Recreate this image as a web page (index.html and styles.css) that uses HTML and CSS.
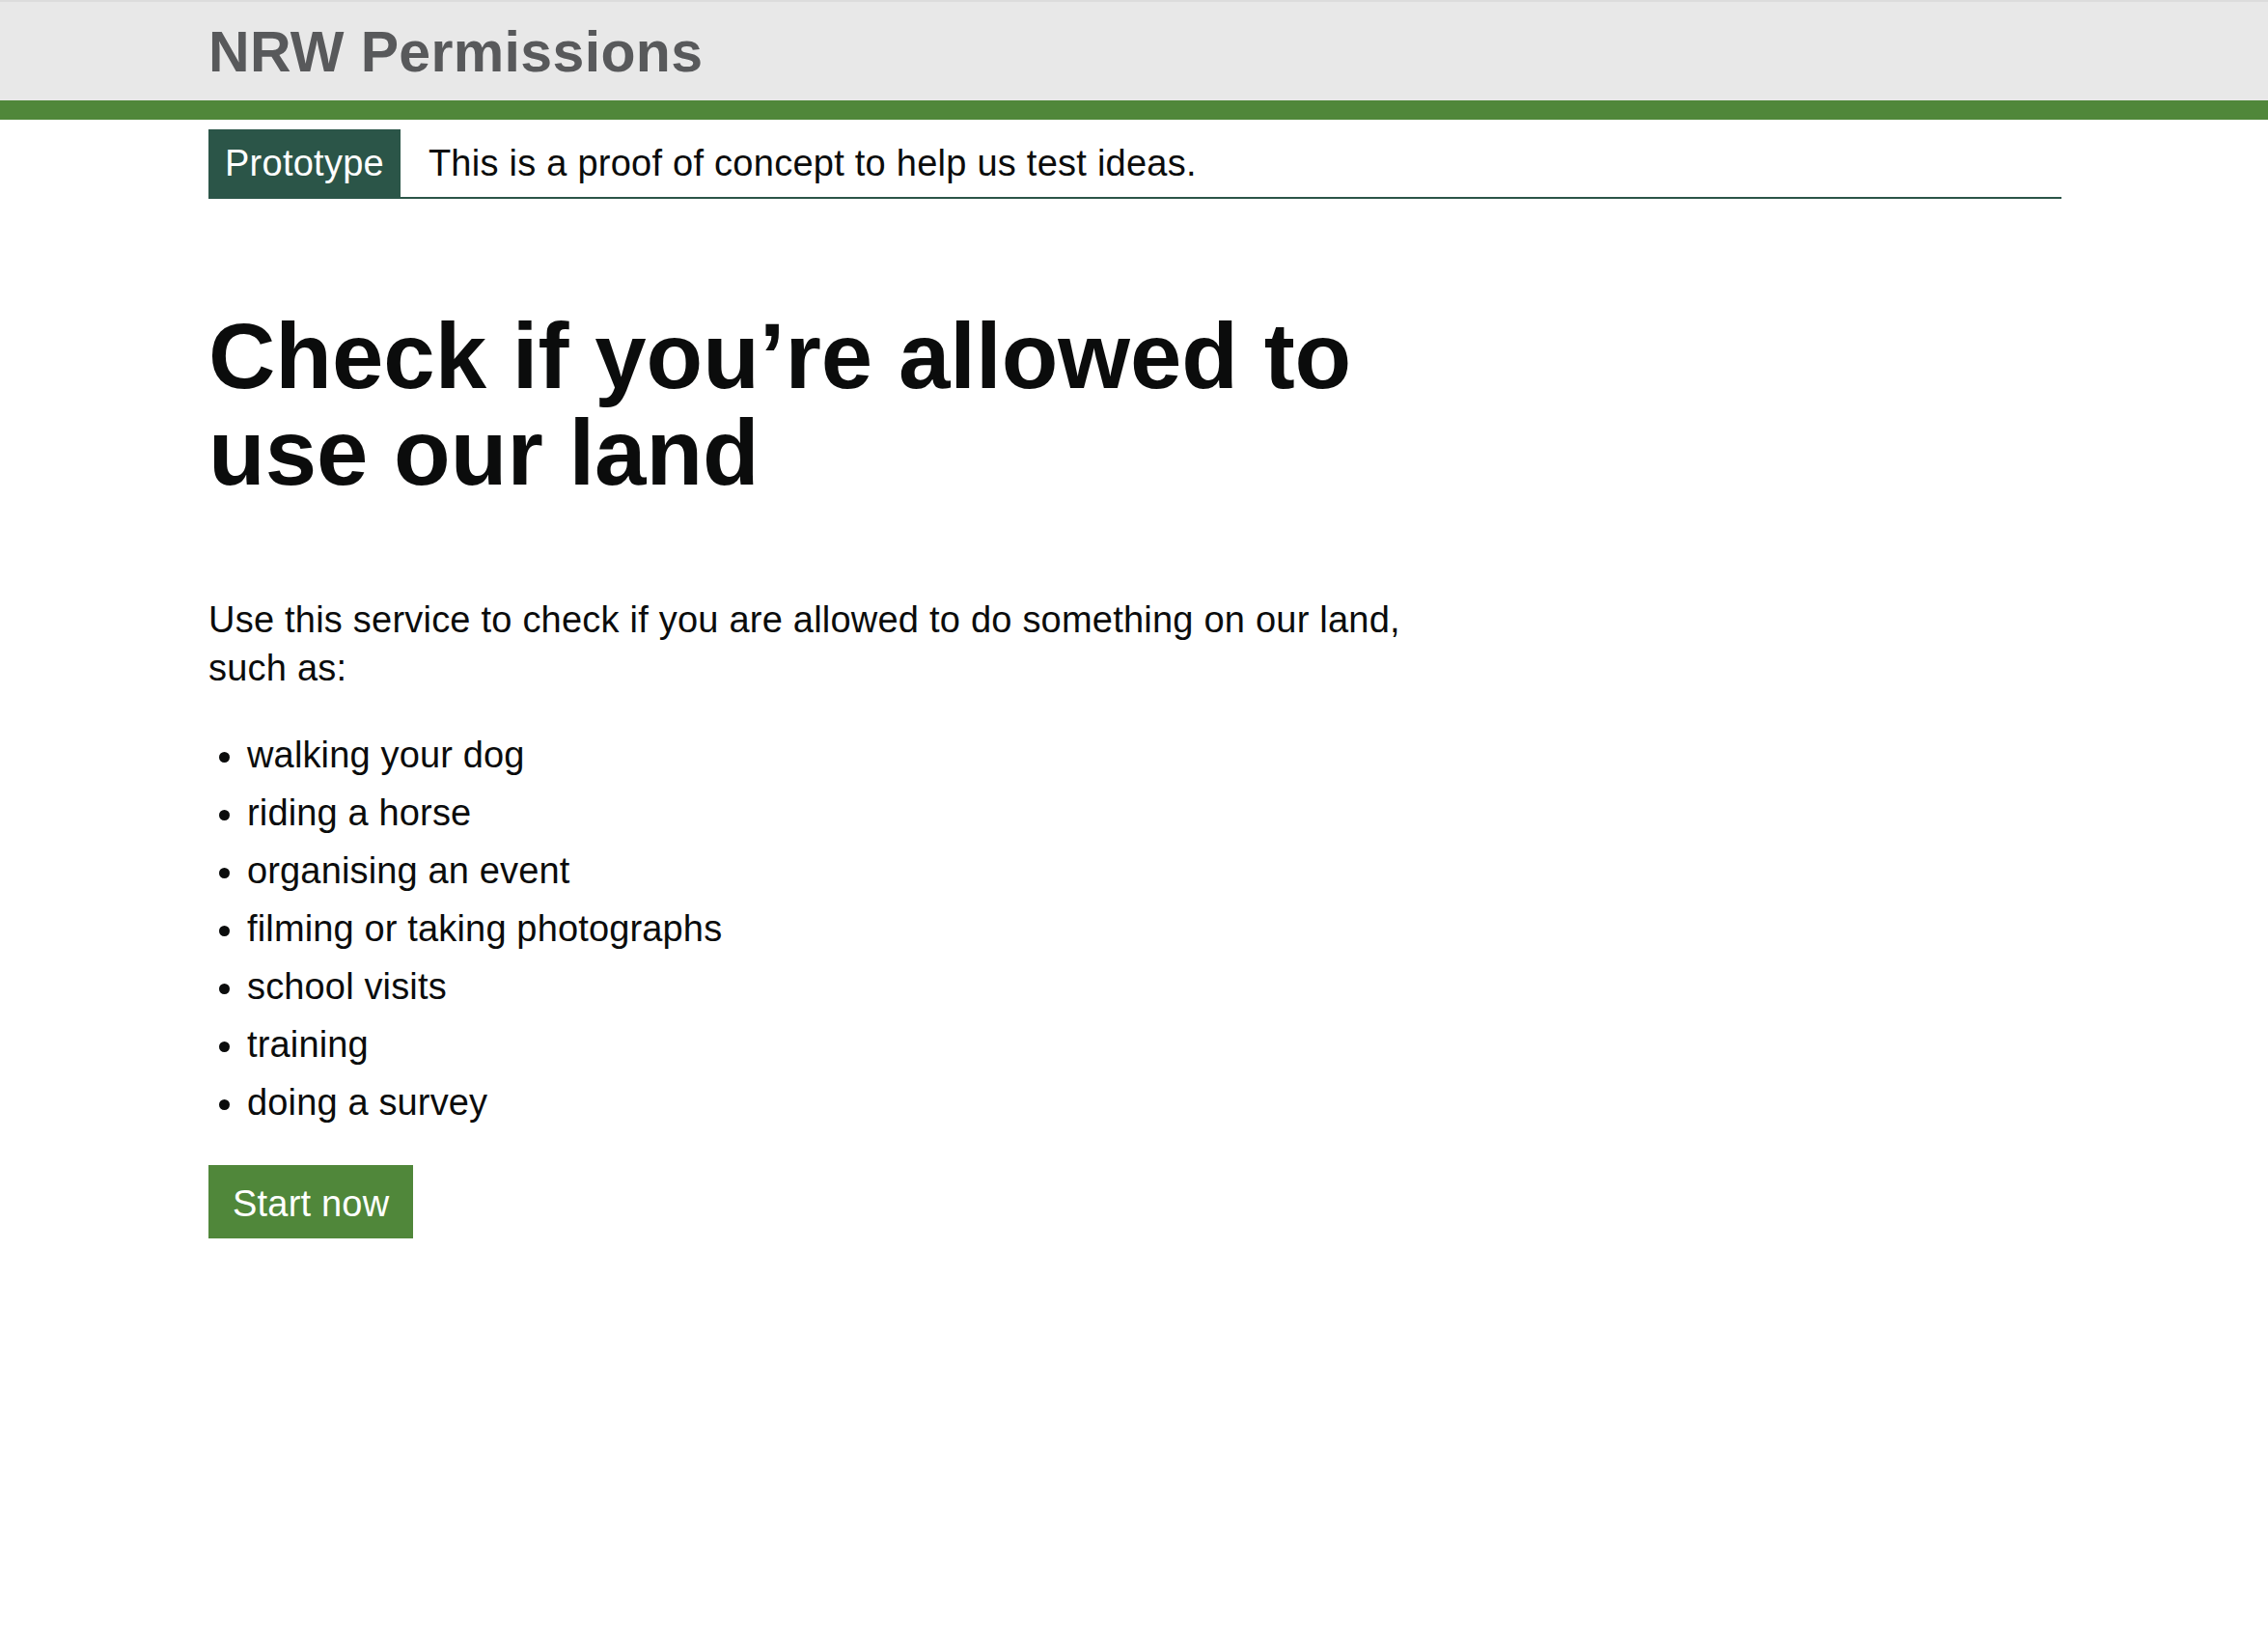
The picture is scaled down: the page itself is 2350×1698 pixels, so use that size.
FILE: index.html
```html
<!DOCTYPE html>
<html lang="en">
<head>
<meta charset="utf-8">
<title>NRW Permissions</title>
<link rel="stylesheet" href="styles.css">
</head>
<body>
<header class="site-header">
  <div class="container header-inner">
    <a class="site-name" href="#">NRW Permissions</a>
  </div>
</header>
<div class="container">
  <div class="phase-banner">
    <strong class="tag">Prototype</strong>
    <span class="phase-text">This is a proof of concept to help us test ideas.</span>
  </div>
  <main class="main">
    <div class="two-thirds">
      <h1 class="heading-xl">Check if you’re allowed to use our land</h1>
      <p class="body">Use this service to check if you are allowed to do something on our land, such as:</p>
      <ul class="bullets">
        <li>walking your dog</li>
        <li>riding a horse</li>
        <li>organising an event</li>
        <li>filming or taking photographs</li>
        <li>school visits</li>
        <li>training</li>
        <li>doing a survey</li>
      </ul>
      <a class="button" href="#">Start now</a>
    </div>
  </main>
</div>
</body>
</html>
```
FILE: styles.css
```css
html, body {
  margin: 0;
  padding: 0;
  background: #ffffff;
}

body {
  font-family: "Liberation Sans", Arial, Helvetica, sans-serif;
  color: #0b0c0c;
}

.container {
  width: 1920px;
  max-width: 100%;
  margin-left: calc(50% - 959px);
}

.site-header {
  background: #e8e8e8;
  border-top: 2px solid #dcdcdc;
  border-bottom: 20px solid #50873a;
}

.header-inner {
  height: 102px;
  box-sizing: border-box;
  padding-top: 23px;
}

.site-name {
  display: inline-block;
  font-size: 59px;
  line-height: 59px;
  font-weight: 700;
  letter-spacing: 0.35px;
  color: #58595b;
  text-decoration: none;
}

.phase-banner {
  display: flex;
  align-items: flex-start;
  padding-top: 10px;
  border-bottom: 2px solid #2b5548;
}

.tag {
  display: block;
  background: #2b5548;
  color: #ffffff;
  font-weight: 400;
  font-size: 38px;
  line-height: 50px;
  letter-spacing: 0.25px;
  padding: 10px 17px;
}

.phase-text {
  display: block;
  margin-left: 29px;
  padding-top: 10px;
  font-size: 38px;
  line-height: 50px;
  letter-spacing: 0.25px;
}

.main {
  padding-top: 113px;
}

.two-thirds {
  max-width: 1280px;
}

.heading-xl {
  margin: 0 0 98px;
  font-size: 96px;
  line-height: 100px;
  font-weight: 700;
}

.body {
  margin: 0 0 40px;
  font-size: 38px;
  line-height: 50px;
  letter-spacing: 0.22px;
}

.bullets {
  margin: 0 0 40px;
  padding-left: 40px;
  font-size: 38px;
  line-height: 50px;
  letter-spacing: 0.15px;
  list-style: disc;
}

.bullets li {
  margin-bottom: 10px;
}

.bullets li:last-child {
  margin-bottom: 0;
}

.button {
  display: inline-block;
  background: #50873a;
  color: #ffffff;
  font-size: 38px;
  line-height: 38px;
  letter-spacing: 0.2px;
  padding: 21px 25px 17px;
  text-decoration: none;
  box-shadow: 0 4px 0 #14301b;
}
```
